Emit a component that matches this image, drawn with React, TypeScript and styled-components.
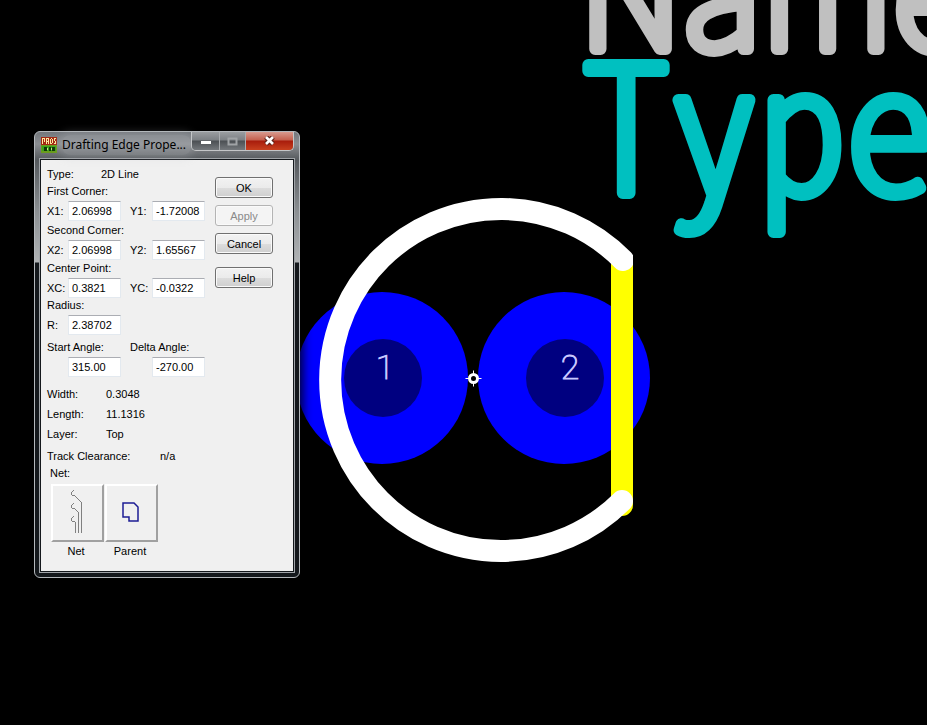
import React, { useState } from "react";
import styled, { createGlobalStyle } from "styled-components";

const GlobalStyle = createGlobalStyle`
  * { box-sizing: border-box; }
  body {
    margin: 0;
    background: #000;
    font-family: "Liberation Sans", Arial, sans-serif;
    font-size: 11px;
    line-height: 16px;
    color: #000;
  }
`;

const Desktop = styled.main`
  position: relative;
  min-height: 100vh;
  overflow: hidden;
  background: #000;
`;

const Board = styled.svg`
  position: absolute;
  inset: 0;
  width: 100%;
  height: 100%;
`;

const PlotterText = styled.text<{ $color: string; $size: number; $half?: boolean }>`
  font-family: "Noto Sans CJK SC", "Noto Sans", sans-serif;
  font-weight: 100;
  font-feature-settings: ${(p) => (p.$half ? '"hwid"' : "normal")};
  font-size: ${(p) => p.$size}px;
  fill: ${(p) => p.$color};
  stroke: ${(p) => p.$color};
  stroke-width: 12px;
  stroke-linejoin: round;
`;

const PadNumber = styled.text`
  font-family: Roboto, sans-serif;
  font-weight: 100;
  font-size: 34px;
  fill: #c8c8ff;
  stroke: #c8c8ff;
  stroke-width: 1px;
  text-anchor: middle;
`;

const Dialog = styled.section`
  position: absolute;
  left: 34px;
  top: 131px;
  width: 266px;
  padding: 0 5px 5px;
  border: 1px solid #b4b8bc;
  border-radius: 6px;
  background: linear-gradient(#73777c 0, #8b8e92 12px, #55595d 28px, #8c9093 80px, #b0b3b5 130px, #14181c 131px, #14181c 100%);
  box-shadow: 0 0 10px 3px rgba(0, 0, 0, 0.8);
`;

const TitleBar = styled.header`
  display: flex;
  align-items: flex-start;
  height: 27px;
`;

const AppIcon = styled.svg`
  flex: none;
  width: 16px;
  height: 16px;
  margin: 5px 5px 0 1px;
`;

const Title = styled.h1`
  flex: 1;
  margin: 3px 0 0;
  font: 400 12px/20px "Noto Sans", "Open Sans", sans-serif;
  white-space: nowrap;
  border-radius: 8px;
  background: rgba(190, 194, 198, 0.25);
  box-shadow: 0 0 8px 3px rgba(190, 194, 198, 0.25);
`;

const CaptionButtons = styled.div`
  display: flex;
  flex: none;
  height: 19px;
  border: 1px solid #c4c6c8;
  border-top: 0;
  border-radius: 0 0 5px 5px;
  overflow: hidden;
`;

const CaptionButton = styled.button<{ $kind?: "close" | "off" }>`
  display: grid;
  place-items: center;
  width: ${(p) => (p.$kind === "close" ? 47 : p.$kind === "off" ? 26 : 28)}px;
  height: 18px;
  padding: 0;
  border: 0;
  border-right: ${(p) => (p.$kind === "close" ? "0" : "1px solid #aaadb0")};
  background: ${(p) =>
    p.$kind === "close"
      ? "linear-gradient(#d89a8e 0, #c4604e 8px, #a81c0c 9px, #c8401e 100%)"
      : "linear-gradient(#9a9da0 0, #7c8084 8px, #4c5054 9px, #74787c 100%)"};
`;

const Client = styled.form`
  display: flex;
  align-items: flex-start;
  gap: 10px;
  padding: 6px 6px 12px;
  border: 1px solid #14181c;
  outline: 1px solid #a0a4a8;
  background: #f0f0f0;
`;

const Details = styled.div`
  flex: none;
  width: 158px;
`;

const Line = styled.div`
  display: flex;
  height: 16px;
  white-space: nowrap;
`;

const Name = styled.span<{ $width: number }>`
  flex: none;
  width: ${(p) => p.$width}px;
`;

const Group = styled.fieldset<{ $space: number }>`
  display: grid;
  grid-template-columns: 74px 75px;
  column-gap: 9px;
  row-gap: 3px;
  min-width: 0;
  margin: ${(p) => p.$space}px 0 0;
  padding: 0;
  border: 0;
`;

const Caption = styled.span<{ $wide?: boolean }>`
  grid-column: ${(p) => (p.$wide ? "1 / -1" : "auto")};
  white-space: nowrap;
`;

const Field = styled.label`
  display: flex;
  justify-content: space-between;
  align-items: center;
  height: 18px;
`;

const ValueInput = styled.input`
  width: 53px;
  height: 20px;
  padding: 0 3px;
  border: 1px solid #e3e9ef;
  border-top-color: #abadb3;
  background: #fff;
  color: #000;
  font: inherit;
`;

const Facts = styled.div`
  display: grid;
  gap: 4px;
  margin-top: 10px;
`;

const Clearance = styled.div`
  display: grid;
  gap: 1px;
  margin-top: 6px;
`;

const Indented = styled(Line)`
  padding-left: 3px;
`;

const Tools = styled.div`
  display: flex;
  margin: 3px 0 0 4px;
`;

const Tool = styled.div`
  display: grid;
  width: 54px;
`;

const ToolName = styled.label`
  padding: 1px 4px 0 0;
  text-align: center;
`;

const ToolButton = styled.button`
  width: 53px;
  height: 58px;
  padding: 0;
  border: 2px solid;
  border-color: #fff #a0a0a0 #a0a0a0 #fff;
  background: #f0f0f0;

  svg {
    display: block;
  }
`;

const Actions = styled.div`
  display: grid;
  flex: none;
  width: 58px;
  gap: 7px;
  padding-top: 11px;
`;

const ActionButton = styled.button<{ $apart?: boolean }>`
  height: 21px;
  margin-top: ${(p) => (p.$apart ? 6 : 0)}px;
  padding: 0;
  border: 1px solid #707070;
  border-radius: 3px;
  background: linear-gradient(#f2f2f2 0, #ebebeb 50%, #dddddd 51%, #cfcfcf 100%);
  box-shadow: inset 0 0 0 1px #fafafa;
  color: #000;
  font: inherit;

  &:disabled {
    border-color: #b4b4b4;
    background: #f4f4f4;
    color: #8a8a8a;
  }
`;

type FieldSpec = { label: string; value: string; hideLabel?: boolean };

function NumberField({ label, value, hideLabel }: FieldSpec) {
  const [text, setText] = useState(value);
  return (
    <Field>
      <span>{hideLabel ? "" : label}</span>
      <ValueInput aria-label={label} value={text} onChange={(e) => setText(e.target.value)} />
    </Field>
  );
}

const groups: { caption: string; space: number; fields: FieldSpec[] }[] = [
  { caption: "First Corner:", space: 1, fields: [{ label: "X1:", value: "2.06998" }, { label: "Y1:", value: "-1.72008" }] },
  { caption: "Second Corner:", space: 2, fields: [{ label: "X2:", value: "2.06998" }, { label: "Y2:", value: "1.65567" }] },
  { caption: "Center Point:", space: 1, fields: [{ label: "XC:", value: "0.3821" }, { label: "YC:", value: "-0.0322" }] },
  { caption: "Radius:", space: 0, fields: [{ label: "R:", value: "2.38702" }] },
];

const facts = [
  ["Width:", "0.3048"],
  ["Length:", "11.1316"],
  ["Layer:", "Top"],
];

function BoardDrawing() {
  return (
    <Board aria-label="Board">
      <defs>
        <clipPath id="edge">
          <rect x="300" y="180" width="333" height="400" />
        </clipPath>
      </defs>
      <PlotterText $color="#c0c0c0" $size={148} x="579" y="49">Name</PlotterText>
      <PlotterText $color="#00c0c0" $size={176} $half x="582" y="193">Type</PlotterText>
      {[382, 564].map((x) => (
        <g key={x}>
          <circle cx={x} cy="378" r="86" fill="#0000ff" />
          <circle cx={x + 1} cy="378" r="39" fill="#000080" />
        </g>
      ))}
      <PadNumber x="385" y="379">1</PadNumber>
      <PadNumber x="570" y="379">2</PadNumber>
      <path d="M622 262V505" stroke="#ffff00" strokeWidth="22" strokeLinecap="round" />
      <path
        d="M623 260A171 171 0 1 0 622 501"
        fill="none"
        stroke="#fff"
        strokeWidth="22"
        strokeLinecap="round"
        clipPath="url(#edge)"
      />
      <circle cx="473.5" cy="378.5" r="4" fill="#000" stroke="#fff" strokeWidth="3" />
      <path d="M465.5 378.5h4M477.5 378.5h4M473.5 370.5v4M473.5 382.5v4" stroke="#fff" />
    </Board>
  );
}

export default function App() {
  return (
    <Desktop>
      <GlobalStyle />
      <BoardDrawing />
      <Dialog role="dialog" aria-labelledby="dialog-title">
        <TitleBar>
          <AppIcon viewBox="0 0 16 16" shapeRendering="crispEdges" aria-hidden="true">
            <path d="M0 0h16v8H0z" fill="#a42814" />
            <path d="M1.500 7V1.500h2v3h-1M5.500 7V1.500h2V7M6 4.500h1M9.500 2v4.500h1l1-1v-3l-1-1h-1M15 1.500h-1.500v2l1 1v2H13" fill="none" stroke="#ffe9a0" />
            <path d="M0 8h16v8H0z" fill="#6a9c1c" />
            <path d="M1 9h14v5H1z" fill="#3ca41c" />
            <path d="M3 10h3v4H3zM8 10h2v4H8zM11 10h3v4h-3z" fill="#103808" />
            <path d="M6 11h1v2H6zM10 11h1v2h-1z" fill="#c8e888" />
          </AppIcon>
          <Title id="dialog-title">Drafting Edge Prope...</Title>
          <CaptionButtons>
            <CaptionButton type="button" aria-label="Minimize">
              <svg width="12" height="10"><rect x="1" y="5" width="10" height="3" fill="#fff" /></svg>
            </CaptionButton>
            <CaptionButton type="button" $kind="off" aria-label="Maximize" disabled>
              <svg width="11" height="9"><rect x="1.5" y="1.5" width="8" height="6" fill="none" stroke="#a0a3a6" strokeWidth="2" /></svg>
            </CaptionButton>
            <CaptionButton type="button" $kind="close" aria-label="Close">
              <svg width="12" height="10"><path d="M2 1l7 7M9 1L2 8" stroke="#5c2018" strokeWidth="5" /><path d="M2 1l7 7M9 1L2 8" stroke="#fff" strokeWidth="2.6" /></svg>
            </CaptionButton>
          </CaptionButtons>
        </TitleBar>
        <Client onSubmit={(e) => e.preventDefault()}>
          <Details>
            <Line><Name $width={54}>Type:</Name>2D Line</Line>
            {groups.map((g) => (
              <Group key={g.caption} $space={g.space}>
                <Caption $wide>{g.caption}</Caption>
                {g.fields.map((f) => <NumberField key={f.label} {...f} />)}
              </Group>
            ))}
            <Group $space={5}>
              <Caption>Start Angle:</Caption>
              <Caption>Delta Angle:</Caption>
              <NumberField label="Start Angle" value="315.00" hideLabel />
              <NumberField label="Delta Angle" value="-270.00" hideLabel />
            </Group>
            <Facts>
              {facts.map(([name, value]) => (
                <Line key={name}><Name $width={59}>{name}</Name>{value}</Line>
              ))}
            </Facts>
            <Clearance>
              <Line><Name $width={113}>Track Clearance:</Name>n/a</Line>
              <Indented>Net:</Indented>
            </Clearance>
            <Tools>
              <Tool>
                <ToolButton type="button" id="tool-net">
                  <svg width="49" height="54" fill="none" stroke="#808080" shapeRendering="crispEdges">
                    <path d="M20.500 4.500l-2 2v2l1 1h2l7 7V47" />
                    <path d="M20.500 17.500l-2 2v2l1 1h2l4 4V47" />
                    <path d="M20.500 30.500l-2 2v2l1 1h2l1 1V47" />
                  </svg>
                </ToolButton>
                <ToolName htmlFor="tool-net">Net</ToolName>
              </Tool>
              <Tool>
                <ToolButton type="button" id="tool-parent">
                  <svg width="49" height="54" fill="none" stroke="#1c1c94">
                    <path d="M16 17h11l4 4v14h-9v-4h-6z" strokeWidth="1.500" />
                  </svg>
                </ToolButton>
                <ToolName htmlFor="tool-parent">Parent</ToolName>
              </Tool>
            </Tools>
          </Details>
          <Actions>
            <ActionButton type="submit">OK</ActionButton>
            <ActionButton type="button" disabled>Apply</ActionButton>
            <ActionButton type="button">Cancel</ActionButton>
            <ActionButton type="button" $apart>Help</ActionButton>
          </Actions>
        </Client>
      </Dialog>
    </Desktop>
  );
}
